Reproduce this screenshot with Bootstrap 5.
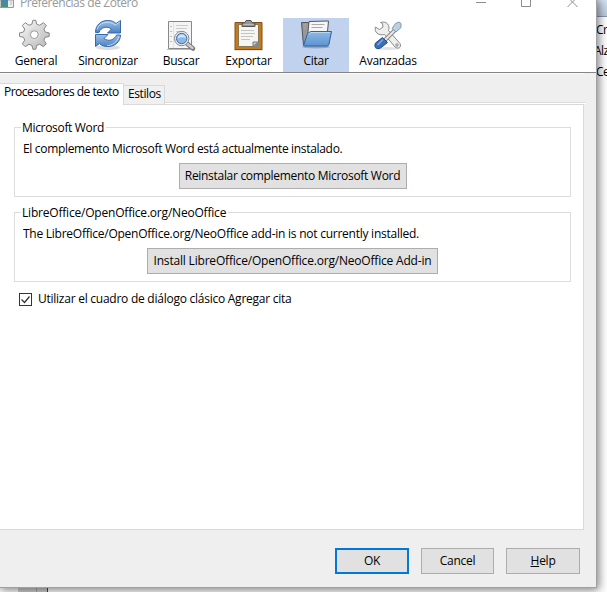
<!DOCTYPE html>
<html lang="es">
<head>
<meta charset="utf-8">
<meta name="viewport" content="width=device-width, initial-scale=1">
<title>Preferencias de Zotero</title>
<link href="https://cdn.jsdelivr.net/npm/bootstrap@5.3.0/dist/css/bootstrap.min.css" rel="stylesheet">
<style>
  body{font:12px/16px "Open Sans","Noto Sans",sans-serif;letter-spacing:-.25px;color:#000;background:#fff;width:607px;height:592px;overflow:hidden;white-space:nowrap}
  .window{width:597px;height:588px;background:#efefef;border-right:1px solid #a0a0a0;border-bottom:1px solid #a0a0a0;box-shadow:1px 1px 9px 1px rgba(0,0,0,.5);z-index:1}
  .titlebar{height:18px;background:#fff;color:#999;padding-right:17px}
  .titlebar .caption{margin:-5px 0 0 6px;letter-spacing:-.43px}
  .tools{height:55px;background:#fff;border-bottom:1px solid #858585;padding-left:3px}
  .tool{width:66px;padding-top:1px}
  .w78{width:78px}.w68{width:68px}.w67{width:67px;margin-right:1px}
  .tool.current{background:#c1d2ee}
  .strip{height:31px;padding-top:9px;border-top:1px solid #fafafa;margin-right:11px}
  .tab-on{background:#fff;border:1px solid #d9d9d9;border-width:1px 1px 0 0;width:124px;height:22px;padding:0 0 0 4px;z-index:1;letter-spacing:-.5px}
  .tab-off{background:#f0f0f0;border:1px solid #d9d9d9;border-width:1px 1px 0 0;width:41px;height:19px;margin-top:2px;padding:0 0 0 4px;letter-spacing:-.4px}
  .pane{background:#fff;border:1px solid #d9d9d9;border-left:0;width:584px;height:426px;padding:15px 12px 0 14px}
  .strip-line{height:2px;background:#fff;border-top:1px solid #dcdcdc;width:586px;margin-top:-2px}
  .group{border:1px solid #dcdcdc;width:557px;height:70px;margin-top:7px;margin-bottom:15px}
  .group .cap{background:#fff;margin:-8px 0 0 6px;padding:0 2px 0 1px;align-self:flex-start;letter-spacing:-.2px}
  .group .cap.tight,.tight{letter-spacing:-.32px}
  .group p{margin:5px 0 0 8px}
  .push{background:#e1e1e1;border:1px solid #adadad;height:26px;line-height:24px;text-align:center;padding:0;border-radius:0;font-size:12px;color:#000;letter-spacing:-.25px}
  .push.main{border:2px solid #0078d7;line-height:22px}
  .b228{width:228px;margin-top:6px;letter-spacing:-.3px}.b291{width:291px;margin-top:6px;letter-spacing:-.19px}.b74{width:74px}.b73{width:73px}
  .check-row{margin-top:-6px}
  .tick{width:13px;height:13px;border:1px solid #333;margin:0 6px 0 5px}
  .footer-row{padding:18px 16px 0 0;gap:12px}
  .behind{width:10px;height:588px;background:#fff}
  .behind .bar{height:17px;background:linear-gradient(#d5e2f2,#b8c9de);border-bottom:1px solid #8296ad;margin-bottom:5px}
  .behind div.row-text{height:21px;margin-left:-1px;letter-spacing:-.5px}
  .behind div.row-text.wide{margin-left:-3px}
  .below{height:4px;background:#fff}
  .below .thumb{width:30px;margin-left:18px;background:#cfcfcf;border-right:1px solid #444}
  .below .thumb i{width:1px;height:4px;margin-left:18px;background:#aaa}
</style>
<script src="https://cdn.jsdelivr.net/npm/bootstrap@5.3.0/dist/js/bootstrap.bundle.min.js"></script>
</head>
<body>
<div class="d-flex">
  <main class="window position-relative flex-shrink-0">
    <header class="titlebar d-flex">
      <svg width="14" height="9"><defs><linearGradient id="app" x2="0" y2="1"><stop stop-color="#4d83b8"/><stop offset="1" stop-color="#3f9b66"/></linearGradient></defs><path d="M0 0h13.500v7.500H0z" fill="#eee" stroke="#999"/><path d="M1 0h7v7H1z" fill="url(#app)"/><path d="M10 2h2M10 4h2" stroke="#bbb"/></svg>
      <span class="caption">Preferencias de Zotero</span>
      <svg class="ms-auto" width="103" height="9" fill="none" stroke="#8d8d8d"><path d="M0 2.500h10M45.500-1v7.500h9V-1M91.500-3l10 10M101.500-3l-10 10"/></svg>
    </header>
    <nav class="tools d-flex text-center">
      <div class="tool"><svg class="d-block mx-auto" width="34" height="34" viewBox="0 0 34 34"><defs><linearGradient id="gear" x2="1" y2="1"><stop stop-color="#fafafa"/><stop offset="1" stop-color="#b5b5b5"/></linearGradient></defs><g transform="translate(-1 0.300) scale(.96)"><path d="M15.500 1h3l1 4 3 1.200L26.500 3.500 29.500 6.500 27 10.200l1.200 3 4.300 1v3.600l-4.300 1-1.200 3 2.500 3.700-3 3-4-2.500-3 1.200-1 4h-3l-1-4-3-1.200-4 2.500-3-3 2.500-3.700-1.200-3-4.300-1v-3.600l4.300-1 1.200-3L4.500 6.500 7.500 3.500l4 2.700 3-1.200z" fill="url(#gear)" stroke="#818181" stroke-linejoin="round"/><circle cx="17" cy="16" r="5.500" fill="none" stroke="#d8d8d8" stroke-width="2"/><circle cx="17" cy="16" r="4" fill="#fff" stroke="#999"/></g></svg>General</div>
      <div class="tool w78"><svg class="d-block mx-auto" width="34" height="34" viewBox="0 0 34 34"><defs><linearGradient id="sync" x2="0" y2="1"><stop stop-color="#9cc3ea"/><stop offset="1" stop-color="#4a80c3"/></linearGradient></defs><ellipse cx="17" cy="28.500" rx="12" ry="2.500" fill="#ddd"/><g fill="url(#sync)" stroke="#3868a8" stroke-linejoin="round"><path d="M4.500 13.500C4.500 6 10 1.500 16.500 1.500c4 0 6.500 1 8.500 3l4.500-3V14H16.500l4-4c-4.500-3.500-11-1.500-12.500 3.500z"/><path d="M29.500 16c0 7-6 11.500-12.500 11.500-4 0-6.500-1-8.500-3l-4 3V15.500H17l-4 4c4.500 3.500 10.500 1.500 12.500-3.500z"/></g><path d="M6 10.500C8 4 16 .5 24.500 6l4-3M28 17.500c-2 6-7 9-12 9" fill="none" stroke="#c3dcf5"/></svg>Sincronizar</div>
      <div class="tool w68"><svg class="d-block mx-auto" width="34" height="34" viewBox="0 0 34 34"><path d="M3 30h25v1H3z" fill="#bbb"/><path d="M4.500 2.500h23v27h-23z" fill="#f4f4f4" stroke="#888"/><path d="M9.500 3v26" stroke="#e2e2e2"/><path d="M7 7v1m0 4v1m0 4v1m0 4v1" stroke="#888"/><path d="M12 6.500h12M12 9.500h11M12 12.500h3" stroke="#ccc"/><path d="M23.500 25l5.500 4.500" stroke="#777" stroke-width="4.500" stroke-linecap="round"/><path d="M23.500 25l5 4" stroke="#ccc" stroke-width="2.500" stroke-linecap="round"/><circle cx="17.700" cy="19.500" r="7.200" fill="#ececec" stroke="#888"/><circle cx="17.700" cy="19.500" r="5.200" fill="#8eb7e8" stroke="#3c6fae"/><path d="M13.700 19.500c0-5.500 8-5.500 8 0-3-2-5-1-8 0z" fill="#d4e7fa"/></svg>Buscar</div>
      <div class="tool w67"><svg class="d-block mx-auto" width="34" height="34" viewBox="0 0 34 34"><path d="M2 30h29v1.500H2z" fill="#ccc"/><path d="M3 3.500h27v27H3z" fill="#c57b18" stroke="#845113" stroke-linejoin="round"/><path d="M6.500 5.500h20v22h-20z" fill="#f5f5f2" stroke="#8c7655"/><path d="M21 27.500v-4.500h5.500z" fill="#ccc" stroke="#777"/><path d="M21.500 28l5.500-5.500V28z" fill="#85857f"/><path d="M9 11.500h13M9 14.500h14M9 17.500h12M9 20.500h9" stroke="#c4c4c4"/><path d="M10 7.500v-3l3-1 1-2h5l1 2 3 1v3z" fill="#969696" stroke="#565656"/><path d="M11.500 5.500h10" stroke="#bbb"/></svg>Exportar</div>
      <div class="tool current"><svg class="d-block mx-auto" width="34" height="34" viewBox="0 0 34 34"><defs><linearGradient id="fold" x2="0" y2="1"><stop stop-color="#8fb9e6"/><stop offset="1" stop-color="#5b93d0"/></linearGradient></defs><ellipse cx="17" cy="28" rx="14" ry="1.500" fill="#93a5c5"/><path d="M2.500 3.500h7v3h18v20h-23z" fill="#999" stroke="#555"/><path d="M10 2.500l19.500-.5-1.500 16H8.500z" fill="#f6f6f6" stroke="#555"/><path d="M12.500 5.500h13M12.500 8.500h11M4.500 6h3M4.500 9h3" stroke="#aaa"/><path d="M8.500 14.500l3-2H32.500L30 25q-.5 2-2 2H5.500q-1 0-.8-1z" fill="url(#fold)" stroke="#2f629f" stroke-linejoin="round"/><path d="M9.500 15.200l2.500-1.700h19" fill="none" stroke="#bad7f3"/></svg>Citar</div>
      <div class="tool w78"><svg class="d-block mx-auto" width="34" height="34" viewBox="0 0 34 34"><ellipse cx="16" cy="29.500" rx="13" ry="1.500" fill="#e3e3e3"/><path d="M4.500 8l4 2.500 3.500-2.500-.5-3.500L9.500 3.500c6-2 10 3 8 8L29 24.500c2 4-2 6-5 3.500L13.500 15.500C7 17 3 13 4.500 8z" fill="#eee" stroke="#8b8b8b"/><circle cx="26" cy="26" r="1.200" fill="#fff" stroke="#888"/><path d="M24 11L14 21" stroke="#888" stroke-width="4"/><path d="M24 11L14 21" stroke="#e8e8e8" stroke-width="2"/><path d="M21 9.500l3.500-5L28 3l2 1.500v4l-5 4.500z" fill="#bdd0df" stroke="#8297aa"/><path d="M11.500 18.500l5 5L9.500 29c-4 2-7-1-5-5z" fill="#3b70b8" stroke="#224b8a"/><path d="M12 20.500L6.500 26" stroke="#7fadde" stroke-width="1.500"/></svg>Avanzadas</div>
    </nav>
    <div class="strip d-flex">
      <div class="tab-on position-relative">Procesadores de texto</div>
      <div class="tab-off">Estilos</div>
    </div>
    <div class="strip-line"></div>
    <section class="pane">
      <div class="group d-flex flex-column">
        <span class="cap tight">Microsoft Word</span>
        <p class="tight">El complemento Microsoft Word está actualmente instalado.</p>
        <button class="push b228 align-self-center">Reinstalar complemento Microsoft Word</button>
      </div>
      <div class="group d-flex flex-column">
        <span class="cap">LibreOffice/OpenOffice.org/NeoOffice</span>
        <p>The LibreOffice/OpenOffice.org/NeoOffice add-in is not currently installed.</p>
        <button class="push b291 align-self-center">Install LibreOffice/OpenOffice.org/NeoOffice Add-in</button>
      </div>
      <label class="check-row d-flex align-items-center"><span class="tick d-flex"><svg width="11" height="11" fill="none" stroke="#333" stroke-width="1.300"><path d="M1.500 5.500l3 3 5-6"/></svg></span>Utilizar el cuadro de diálogo clásico Agregar cita</label>
    </section>
    <footer class="footer-row d-flex justify-content-end">
      <button class="push main b74">OK</button>
      <button class="push b73">Cancel</button>
      <button class="push b74"><u>H</u>elp</button>
    </footer>
  </main>
  <aside class="behind">
    <div class="bar"></div>
    <div class="row-text">Cr</div><div class="row-text wide">Alz</div><div class="row-text">Ce</div>
  </aside>
</div>
<div class="below"><div class="thumb"><i class="d-block"></i></div></div>
</body>
</html>
